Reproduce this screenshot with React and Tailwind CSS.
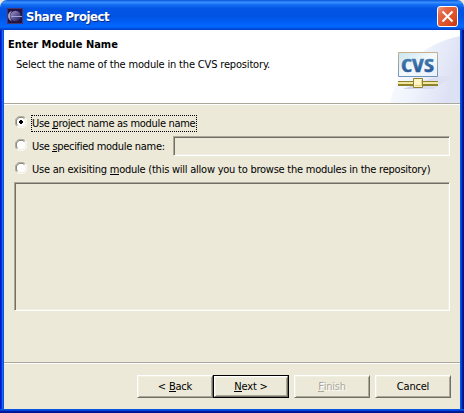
import React from "react";

const FONT = "font-['DejaVu_Sans_Condensed','DejaVu_Sans',sans-serif] [font-stretch:condensed]";

function Key({ children }) {
  return <span className="inline-block h-[12px] border-b border-current leading-[13px]">{children}</span>;
}

function EclipseIcon() {
  return (
    <svg width="16" height="16" viewBox="0 0 16 16" className="shrink-0">
      <defs>
        <linearGradient id="sphere" x1="0" y1="0" x2="1" y2="1">
          <stop offset="0" stopColor="#a09cc4" />
          <stop offset=".5" stopColor="#5d5694" />
          <stop offset="1" stopColor="#201a52" />
        </linearGradient>
      </defs>
      <path fill="#211443" d="M0 0h16v16H0z" />
      <path d="M.5 15.5V.5h15v15z" fill="none" stroke="#4b346d" />
      <path d="M5 2.500C2 4 1 5.800 1 8s1 4 4 5.500C2.600 10.700 2.600 5.300 5 2.500z" fill="#a9a2c6" />
      <circle cx="8.500" cy="8" r="5.200" fill="url(#sphere)" />
      <path d="M4 8.500h11" stroke="#a5a2d8" />
    </svg>
  );
}

function TitleBar() {
  return (
    <header className="flex h-[30px] shrink-0 items-center rounded-t-[7px] bg-[linear-gradient(180deg,#0855dd_0%,#3b91ff_8%,#1470f4_15%,#0355e5_28%,#0054e3_55%,#0260f8_76%,#0167ff_90%,#0148d0_97%,#003dcc_100%)] pl-[7px] pr-[6px] pt-[2px]">
      <EclipseIcon />
      <span className="ml-[3px] mt-[2px] whitespace-pre text-[13px] font-bold leading-[18px] tracking-[-0.48px] text-white [text-shadow:1px_1px_0_#092b80]">Share Project</span>
      <button aria-label="Close" className="ml-auto flex size-[21px] items-center justify-center rounded-[3px] border border-white bg-[linear-gradient(135deg,#f0a18c_0%,#e56845_25%,#dd4c25_70%,#bd3512_100%)]">
        <svg width="13" height="13" viewBox="0 0 13 13">
          <path d="M1.500 1.500l10 10m0-10l-10 10" stroke="#fff" strokeWidth="2" />
        </svg>
      </button>
    </header>
  );
}

function Banner() {
  return (
    <svg width="90" height="73" viewBox="0 0 90 73" className="shrink-0">
      <defs>
        <linearGradient id="swoosh" x1="0" y1="0" x2="1" y2=".3">
          <stop offset="0" stopColor="#fbfdff" />
          <stop offset=".5" stopColor="#f0f4fd" />
          <stop offset="1" stopColor="#dde1f4" />
        </linearGradient>
        <linearGradient id="panel" x1="0" y1="0" x2="1" y2="1">
          <stop offset="0" stopColor="#c8e5ed" />
          <stop offset=".5" stopColor="#f4f9fc" />
          <stop offset="1" stopColor="#e9f0fa" />
        </linearGradient>
        <linearGradient id="panelEdge" x1="0" y1="0" x2="0" y2="1">
          <stop offset="0" stopColor="#c8b28e" />
          <stop offset="1" stopColor="#6e94bd" />
        </linearGradient>
        <linearGradient id="letters" x1="0" y1="0" x2="0" y2="1">
          <stop offset="0" stopColor="#4d8bb8" />
          <stop offset="1" stopColor="#204e91" />
        </linearGradient>
        <linearGradient id="shade" x1="0" y1="0" x2="1" y2="0">
          <stop offset="0" stopColor="#c1c4de" stopOpacity=".8" />
          <stop offset="1" stopColor="#c1c4de" stopOpacity="0" />
        </linearGradient>
      </defs>
      <path d="M20 73C27 38 52 14 90 6v67z" fill="url(#swoosh)" />
      <path d="M33 59l35-13h15L64 59z" fill="url(#shade)" />
      <path d="M28.500 22.500h39v24h-39z" fill="url(#panel)" stroke="url(#panelEdge)" />
      <text x="31" y="41.500" textLength="33" lengthAdjust="spacingAndGlyphs" fontFamily="Open Sans, sans-serif" fontWeight="700" fontSize="18" fill="url(#letters)" stroke="url(#letters)" strokeWidth=".4">CVS</text>
      <path d="M28 51h40v5H28z" fill="#8d8228" />
      <path d="M28 52h40v2H28z" fill="#f1e6a1" />
      <path d="M43.500 48.500h9v9h-9z" fill="#fff4c8" stroke="#8d8228" />
      <path d="M45 55.500h6.500V50" fill="none" stroke="#e6d27e" />
    </svg>
  );
}

function Radio({ checked }) {
  return (
    <svg width="12" height="12" viewBox="0 0 12 12" className="mt-px shrink-0">
      <circle cx="6" cy="6" r="5" fill="#fff" />
      <path d="M1.800 10.200A5.500 5.500 0 0 1 10.200 1.800" fill="none" stroke="#aca899" />
      <path d="M2.600 9.400A4.500 4.500 0 0 1 9.400 2.600" fill="none" stroke="#716f64" />
      <path d="M10.200 1.800A5.500 5.500 0 0 1 1.800 10.200" fill="none" stroke="#fff" />
      <path d="M9.400 2.600A4.500 4.500 0 0 1 2.600 9.400" fill="none" stroke="#f1efe2" />
      {checked && <path d="M5 4h2v1h1v2H7v1H5V7H4V5h1z" fill="#000" />}
    </svg>
  );
}

const SUNKEN = "border border-b-white border-l-[#aca899] border-r-white border-t-[#aca899] shadow-[inset_1px_1px_0_#716f64,inset_-1px_-1px_0_#f1efe2]";
const RAISED = "border border-b-[#716f64] border-l-white border-r-[#716f64] border-t-white shadow-[inset_1px_1px_0_#f1efe2,inset_-1px_-1px_0_#aca899]";

export default function App() {
  return (
    <div className={`${FONT} flex h-[413px] w-[464px] flex-col overflow-hidden bg-[#ece9d8] text-[11px] text-black`}>
      <TitleBar />
      <div className="flex min-h-0 flex-1 bg-[linear-gradient(90deg,#0019cf_0_1px,#0831d9_1px_2px,#166aee_2px_3px,#0855dd_3px_4px,transparent_4px_460px,#0855dd_460px_461px,#0041dc_461px_462px,#001da0_462px_463px,#00138c_463px)] px-1">
        <main className="flex w-full flex-col bg-[#ece9d8]">
          <section className="flex h-[73px] shrink-0 bg-white">
            <div className="flex-1 pl-1 pt-[8px]">
              <h1 className="whitespace-pre font-bold leading-[14px]">Enter Module Name</h1>
              <p className="ml-[8px] mt-[6px] whitespace-pre leading-[14px] tracking-[-0.17px]">Select the name of the module in the CVS repository.</p>
            </div>
            <Banner />
          </section>
          <div className="h-[2px] shrink-0 border-b border-t border-b-white border-t-[#aca899]" />
          <form className="flex h-[257px] shrink-0 flex-col px-[10px] pt-[10px]">
            <div className="flex h-[17px] pl-px">
              <Radio checked />
              <span className="ml-[4px] h-[17px] w-[166px] whitespace-pre border border-dotted border-black leading-[16px] tracking-[-0.31px]">Use <Key>p</Key>roject name as module name</span>
            </div>
            <div className="mt-[4px] flex h-[20px] pl-px">
              <div className="pt-[2px]"><Radio /></div>
              <span className="ml-[5px] w-[141px] whitespace-pre pt-[2px] leading-[17px] tracking-[-0.31px]">Use <Key>s</Key>pecified module name:</span>
              <div className={`${SUNKEN} flex-1`} />
            </div>
            <div className="mt-[5px] flex h-[17px] pl-px">
              <Radio />
              <span className="ml-[5px] whitespace-pre leading-[17px] tracking-[-0.24px]">Use an exisiting <Key>m</Key>odule (this will allow you to browse the modules in the repository)</span>
            </div>
            <div className={`${SUNKEN} mt-[4px] h-[129px]`} />
          </form>
          <div className="h-[2px] shrink-0 border-b border-t border-b-white border-t-[#aca899]" />
          <footer className="flex justify-end pr-[9px] pt-[11px] leading-[20px] tracking-[-0.2px]">
            <button className={`${RAISED} h-[23px] w-[76px]`}>&lt; <Key>B</Key>ack</button>
            <button className="h-[23px] w-[76px] border border-black p-0"><span className={`${RAISED} block h-[21px] leading-[20px]`}><Key>N</Key>ext &gt;</span></button>
            <button className={`${RAISED} ml-[5px] h-[23px] w-[76px] text-[#aca899] [text-shadow:1px_1px_0_white]`}><Key>F</Key>inish</button>
            <button className={`${RAISED} ml-[5px] h-[23px] w-[76px]`}>Cancel</button>
          </footer>
        </main>
      </div>
      <div className="h-1 shrink-0 bg-[linear-gradient(180deg,#0855dd_0_1px,#0041dc_1px_2px,#001da0_2px_3px,#00138c_3px)]" />
    </div>
  );
}
